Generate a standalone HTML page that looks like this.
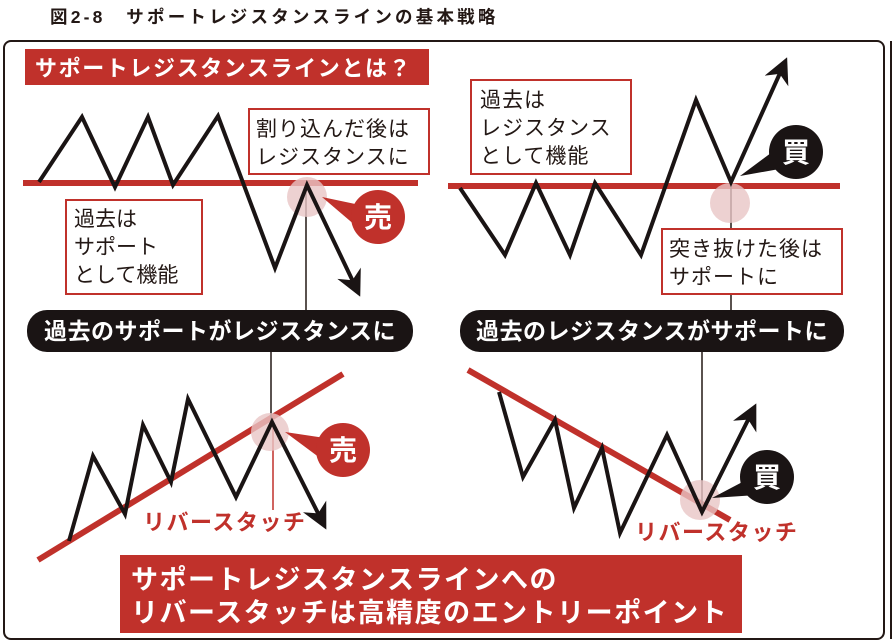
<!DOCTYPE html>
<html><head><meta charset="utf-8"><style>
html,body{margin:0;padding:0;background:#fff;}
svg{display:block}
text{font-family:"Liberation Sans","Noto Sans CJK JP",sans-serif;}
</style></head><body>
<svg width="896" height="644" viewBox="0 0 896 644" xmlns="http://www.w3.org/2000/svg">
<defs>
<marker id="ah" viewBox="0 0 10 10" refX="8" refY="5" markerWidth="6.5" markerHeight="6.5" orient="auto" markerUnits="strokeWidth">
<path d="M0,0 L10,5 L0,10 L3,5 Z" fill="#1a1414"/></marker>
</defs>
<text x="50" y="23" font-size="17.5" font-weight="bold" letter-spacing="3.2" fill="#231815">図2-8　サポートレジスタンスラインの基本戦略</text>
<rect x="890" y="41" width="2" height="598" fill="#231815"/>
<rect x="4" y="41" width="880" height="598" rx="7" fill="#fff" stroke="#231815" stroke-width="2"/>

<rect x="25" y="49" width="404" height="36" fill="#c0312b"/>
<text x="35" y="76" font-size="22" font-weight="bold" letter-spacing="1.6" fill="#fff">サポートレジスタンスラインとは？</text>

<!-- top-left -->
<line x1="23" y1="183" x2="418" y2="183" stroke="#c0312b" stroke-width="6"/>
<line x1="306" y1="185" x2="306" y2="315" stroke="#231815" stroke-width="1.5"/>
<circle cx="307" cy="197" r="20" fill="#e9c6c6" opacity="0.8"/>
<polyline points="39,182 82,117 115,187 148,117 173,185 218,116 275,268 307,185 358,292" fill="none" stroke="#1a1414" stroke-width="4" marker-end="url(#ah)"/>
<path d="M322,197 L360,205 L356,226 Z" fill="#c0312b"/>
<circle cx="378" cy="217" r="27" fill="#c0312b"/>
<text x="378" y="227" font-size="28" font-weight="bold" fill="#fff" text-anchor="middle">売</text>
<rect x="249" y="109" width="180" height="65" fill="#fff" stroke="#c0312b" stroke-width="2"/>
<text x="256" y="136" font-size="21" letter-spacing="1" fill="#231815">割り込んだ後は</text>
<text x="256" y="164" font-size="21" letter-spacing="1" fill="#231815">レジスタンスに</text>
<rect x="66" y="200" width="136" height="94" fill="#fff" stroke="#c0312b" stroke-width="2"/>
<text x="74" y="226" font-size="21" fill="#231815">過去は</text>
<text x="74" y="254" font-size="21" fill="#231815">サポート</text>
<text x="74" y="282" font-size="21" fill="#231815">として機能</text>

<!-- top-right -->
<line x1="448" y1="186" x2="840" y2="186" stroke="#c0312b" stroke-width="6"/>
<line x1="731" y1="182" x2="731" y2="318" stroke="#231815" stroke-width="1.5"/>
<circle cx="730" cy="203" r="20" fill="#e9c6c6" opacity="0.8"/>
<polyline points="460,188 505,255 536,183 570,255 595,183 641,255 696,100 731,182 785,62" fill="none" stroke="#1a1414" stroke-width="4" marker-end="url(#ah)"/>
<path d="M740,176 L775,150 L785,168 Z" fill="#1a1414"/>
<circle cx="796" cy="152" r="27" fill="#1a1414"/>
<text x="796" y="162" font-size="28" font-weight="bold" fill="#fff" text-anchor="middle">買</text>
<rect x="471" y="80" width="160" height="94" fill="#fff" stroke="#c0312b" stroke-width="2"/>
<text x="480" y="107" font-size="21" letter-spacing="1" fill="#231815">過去は</text>
<text x="480" y="135" font-size="21" letter-spacing="1" fill="#231815">レジスタンス</text>
<text x="480" y="163" font-size="21" letter-spacing="1" fill="#231815">として機能</text>
<rect x="662" y="229" width="180" height="65" fill="#fff" stroke="#c0312b" stroke-width="2"/>
<text x="669" y="256" font-size="21" letter-spacing="1" fill="#231815">突き抜けた後は</text>
<text x="669" y="284" font-size="21" letter-spacing="1" fill="#231815">サポートに</text>

<!-- pills -->
<rect x="27" y="310" width="386" height="42" rx="20" fill="#1a1414"/>
<text x="220" y="339" font-size="23" font-weight="bold" letter-spacing="0.5" fill="#fff" text-anchor="middle">過去のサポートがレジスタンスに</text>
<rect x="460" y="310" width="384" height="42" rx="20" fill="#1a1414"/>
<text x="652" y="339" font-size="23" font-weight="bold" letter-spacing="0.5" fill="#fff" text-anchor="middle">過去のレジスタンスがサポートに</text>

<!-- bottom-left -->
<line x1="38" y1="560" x2="343" y2="374" stroke="#c0312b" stroke-width="6"/>
<line x1="271" y1="352" x2="271" y2="422" stroke="#231815" stroke-width="1.5"/>
<line x1="273" y1="424" x2="273" y2="510" stroke="#c0312b" stroke-width="1.5"/>
<circle cx="270" cy="432" r="19" fill="#e9c6c6" opacity="0.8"/>
<polyline points="69,541 93,456 125,514 143,425 171,482 188,399 236,497 272,422 324,525" fill="none" stroke="#1a1414" stroke-width="4" marker-end="url(#ah)"/>
<path d="M285,432 L325,438 L320,458 Z" fill="#c0312b"/>
<circle cx="343" cy="450" r="27" fill="#c0312b"/>
<text x="343" y="460" font-size="28" font-weight="bold" fill="#fff" text-anchor="middle">売</text>
<text x="143" y="530" font-size="22" font-weight="bold" letter-spacing="1.5" fill="#c0312b">リバースタッチ</text>

<!-- bottom-right -->
<line x1="468" y1="370" x2="730" y2="520" stroke="#c0312b" stroke-width="6"/>
<line x1="702" y1="352" x2="702" y2="512" stroke="#231815" stroke-width="1.5"/>
<circle cx="700" cy="500" r="20" fill="#e9c6c6" opacity="0.8"/>
<polyline points="499,392 523,477 555,420 574,508 602,448 620,533 667,435 702,512 754,408" fill="none" stroke="#1a1414" stroke-width="4" marker-end="url(#ah)"/>
<path d="M712,498 L750,478 L757,495 Z" fill="#1a1414"/>
<circle cx="767" cy="477" r="27" fill="#1a1414"/>
<text x="767" y="487" font-size="28" font-weight="bold" fill="#fff" text-anchor="middle">買</text>
<text x="635" y="540" font-size="22" font-weight="bold" letter-spacing="1.5" fill="#c0312b">リバースタッチ</text>

<!-- bottom box -->
<rect x="120" y="555" width="622" height="78" fill="#c0312b"/>
<text x="131" y="589" font-size="27" font-weight="bold" letter-spacing="1.5" fill="#fff">サポートレジスタンスラインへの</text>
<text x="131" y="622" font-size="27" font-weight="bold" letter-spacing="1.5" fill="#fff">リバースタッチは高精度のエントリーポイント</text>
</svg>
</body></html>
